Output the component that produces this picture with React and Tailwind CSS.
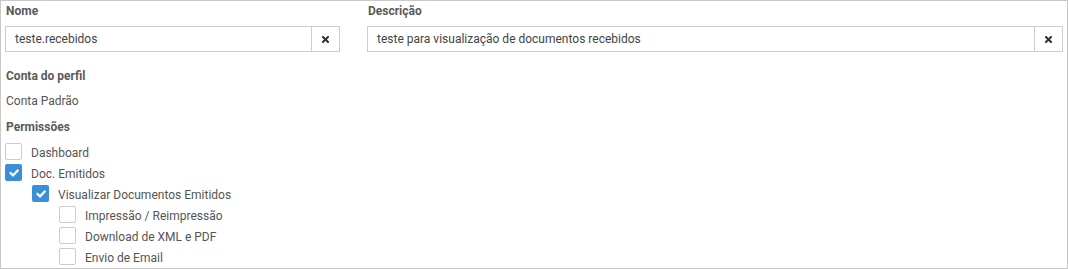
import React from 'react'

const font = { fontFamily: 'Roboto, "Noto Sans", sans-serif' }

const ClearIcon = () => (
  <svg width="7" height="7" viewBox="0 0 7 7">
    <path d="M1 1 L6 6 M6 1 L1 6" stroke="#333" strokeWidth="2" strokeLinecap="square" />
  </svg>
)

const CheckIcon = () => (
  <svg width="10" height="8" viewBox="0 0 10 8">
    <path d="M1.5 4 L4 6.4 L8.6 1.6" fill="none" stroke="#fff" strokeWidth="2.2" strokeLinecap="square" />
  </svg>
)

const Field = ({ label, value, className = '' }) => (
  <div className={className}>
    <div className="h-[20px] leading-[20px] text-[12px] font-bold text-[#5a5a5a] pl-[1px]">{label}</div>
    <div className="mt-[5px] flex h-[26px]">
      <div className="flex-1 flex items-center border border-[#cccccc] pl-[9px] text-[12px] text-[#444]">
        {value}
      </div>
      <button className="w-[28px] flex items-center justify-center border border-l-0 border-[#cccccc] bg-white">
        <ClearIcon />
      </button>
    </div>
  </div>
)

const Perm = ({ label, checked, level }) => {
  const indent = ['pl-[0px]', 'pl-[27px]', 'pl-[54px]'][level]
  return (
    <div className={`flex items-center h-[17px] ${indent}`}>
      {checked ? (
        <span className="w-[17px] h-[17px] rounded-[2px] bg-[#3a8fd9] flex items-center justify-center">
          <CheckIcon />
        </span>
      ) : (
        <span className="w-[17px] h-[17px] rounded-[2px] border border-[#cccccc] bg-white" />
      )}
      <span className="ml-[9px] text-[12px] text-[#555] pt-[2px]">{label}</span>
    </div>
  )
}

const perms = [
  { label: 'Dashboard', checked: false, level: 0 },
  { label: 'Doc. Emitidos', checked: true, level: 0 },
  { label: 'Visualizar Documentos Emitidos', checked: true, level: 1 },
  { label: 'Impressão / Reimpressão', checked: false, level: 2 },
  { label: 'Download de XML e PDF', checked: false, level: 2 },
  { label: 'Envio de Email', checked: false, level: 2 },
]

export default function App() {
  return (
    <div style={font} className="w-[1068px] h-[269px] bg-white border border-[#c8c8c8] px-[4px] pb-[2px] overflow-hidden">
      <div className="flex gap-[27px]">
        <Field label="Nome" value="teste.recebidos" className="w-[335px]" />
        <Field label="Descrição" value="teste para visualização de documentos recebidos" className="flex-1" />
      </div>
      <div className="mt-[14px] h-[20px] leading-[20px] text-[12px] font-bold text-[#5a5a5a] pl-[1px]">Conta do perfil</div>
      <div className="mt-[5px] h-[20px] leading-[20px] text-[12px] text-[#555] pl-[1px]">Conta Padrão</div>
      <div className="mt-[6px] h-[20px] leading-[20px] text-[12px] font-bold text-[#5a5a5a] pl-[1px]">Permissões</div>
      <div className="mt-[6px] flex flex-col gap-[4px]">
        {perms.map((p) => (
          <Perm key={p.label} {...p} />
        ))}
      </div>
    </div>
  )
}
